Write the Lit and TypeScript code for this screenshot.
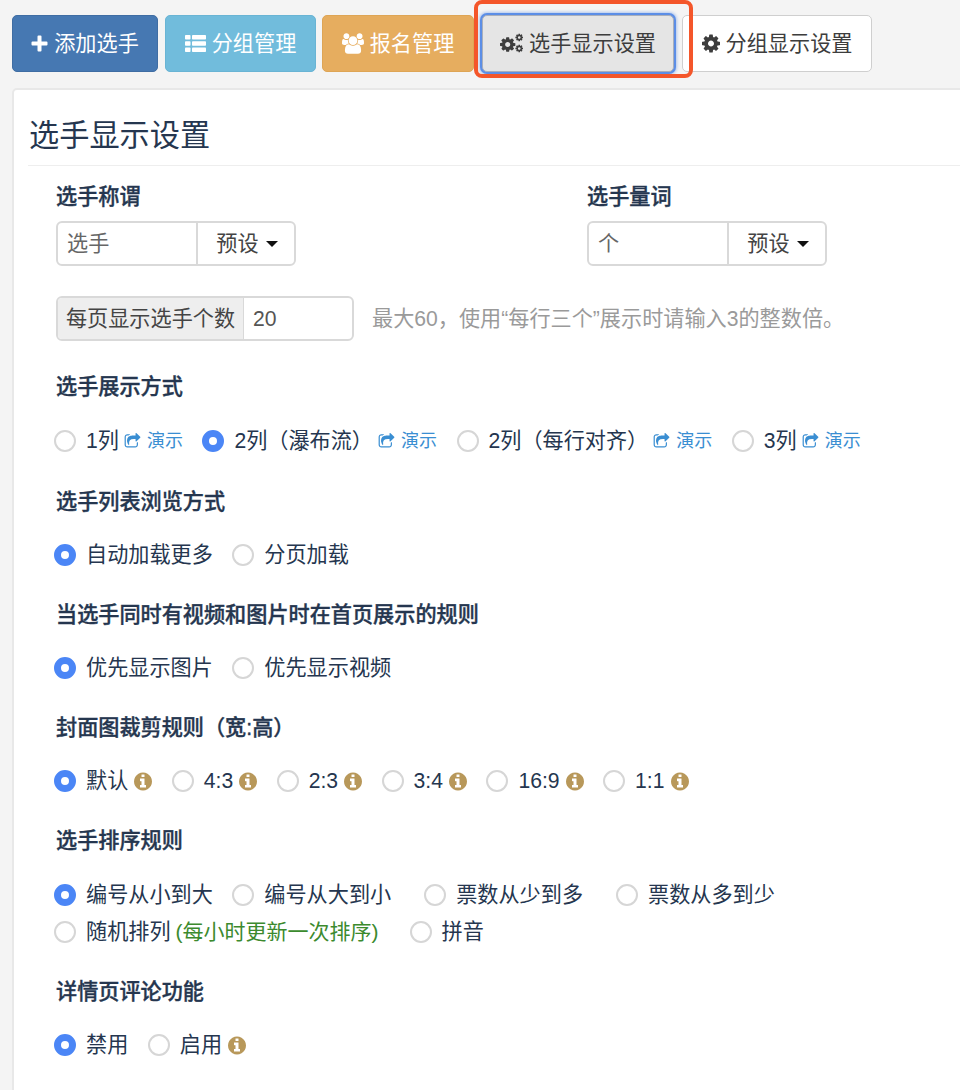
import { LitElement, html, css, svg } from "lit";
import { customElement } from "lit/decorators.js";

const COG = "M1024 896q0-106-75-181t-181-75-181 75-75 181 75 181 181 75 181-75 75-181zm512-109v222q0 12-8 23t-20 13l-185 28q-19 54-39 91 35 50 107 138 10 12 10 25t-9 23q-27 37-99 108t-94 71q-12 0-26-9l-138-108q-44 23-91 38-16 136-29 186-7 28-36 28h-222q-14 0-24.500-8.500t-11.500-21.500l-28-184q-49-16-90-37l-141 107q-10 9-25 9-14 0-25-11-126-114-165-168-7-10-7-23 0-12 8-23 15-21 51-66.500t54-70.500q-27-50-41-99l-183-27q-13-2-21-12.500t-8-23.500v-222q0-12 8-23t19-13l186-28q14-46 39-92-40-57-107-138-10-12-10-24 0-10 9-23 26-36 98.500-107.500t94.500-71.500q13 0 26 10l138 107q44-23 91-38 16-136 29-186 7-28 36-28h222q14 0 24.500 8.500t11.500 21.500l28 184q49 16 90 37l142-107q9-9 24-9 13 0 25 10 129 119 165 170 7 8 7 22 0 12-8 23-15 21-51 66.500t-54 70.500q26 50 41 98l183 28q13 2 21 12.500t8 23.500z";
const INFO = "M1024 1376v-160q0-14-9-23t-23-9h-96v-512q0-14-9-23t-23-9h-320q-14 0-23 9t-9 23v160q0 14 9 23t23 9h96v320h-96q-14 0-23 9t-9 23v160q0 14 9 23t23 9h448q14 0 23-9t9-23zm-128-896v-160q0-14-9-23t-23-9h-192q-14 0-23 9t-9 23v160q0 14 9 23t23 9h192q14 0 23-9t9-23zm640 416q0 209-103 385.500t-279.500 279.500-385.500 103-385.500-103-279.500-279.500-103-385.500 103-385.500 279.500-279.500 385.500-103 385.500 103 279.500 279.500 103 385.500z";
const SHARE = "M1472 989v259q0 119-84.500 203.500t-203.500 84.500h-832q-119 0-203.500-84.500t-84.500-203.500v-832q0-119 84.500-203.500t203.500-84.500h255q13 0 22.500 9.500t9.500 22.500q0 27-26 32-77 26-133 60-10 4-16 4h-112q-66 0-113 47t-47 113v832q0 66 47 113t113 47h832q66 0 113-47t47-113v-214q0-19 18-29 28-13 54-37 16-16 35-8 21 9 21 29zm237-496l-384 384q-18 19-45 19-12 0-25-5-39-17-39-59v-192h-160q-323 0-438 131-119 137-74 473 3 23-20 34-8 2-12 2-16 0-26-13-10-14-21-31t-39.500-68.500-49.500-99.500-38.500-114-17.500-122q0-49 3.500-91t14-90 28-88 47-81.500 68.500-74 94.500-61.500 124.500-48.500 159.500-30.500 196.500-11h160v-192q0-42 39-59 13-5 25-5 26 0 45 19l384 384q19 19 19 45t-19 45z";
const USERS = "M593 896q-162 5-265 128h-134q-82 0-138-40.500t-56-118.500q0-353 124-353 6 0 43.500 21t97.500 42.500 119 21.500q67 0 133-23-5 37-5 66 0 139 81 256zm1071 637q0 120-73 189.500t-194 69.500h-874q-121 0-194-69.500t-73-189.500q0-53 3.500-103.500t14-109 26.500-108.500 43-97.500 62-81 85.500-53.500 111.500-20q10 0 43 21.500t73 48 107 48 135 21.500 135-21.500 107-48 73-48 43-21.500q61 0 111.500 20t85.500 53.500 62 81 43 97.500 26.500 108.500 14 109 3.500 103.500zm-1024-1277q0 106-75 181t-181 75-181-75-75-181 75-181 181-75 181 75 75 181zm704 384q0 159-112.500 271.500t-271.500 112.500-271.500-112.500-112.500-271.500 112.500-271.500 271.500-112.500 271.500 112.500 112.500 271.500zm576 225q0 78-56 118.500t-138 40.500h-134q-103-123-265-128 81-117 81-256 0-29-5-66 66 23 133 23 59 0 119-21.500t97.500-42.500 43.500-21q124 0 124 353zm-128-609q0 106-75 181t-181 75-181-75-75-181 75-181 181-75 181 75 75 181z";

const plus = html`<svg class="ic" width="17" height="17" viewBox="0 0 17 17"><path fill="currentColor" d="M6.500 1.500a1 1 0 0 1 1-1h2a1 1 0 0 1 1 1v5h5a1 1 0 0 1 1 1v2a1 1 0 0 1-1 1h-5v5a1 1 0 0 1-1 1h-2a1 1 0 0 1-1-1v-5h-5a1 1 0 0 1-1-1v-2a1 1 0 0 1 1-1h5z"/></svg>`;
const list = html`<svg class="ic" width="21" height="17" viewBox="0 0 21 17"><g fill="currentColor"><rect y="0" width="5.500" height="4.600" rx=".8"/><rect y="6.200" width="5.500" height="4.600" rx=".8"/><rect y="12.400" width="5.500" height="4.600" rx=".8"/><rect x="7" y="0" width="14" height="4.600" rx=".8"/><rect x="7" y="6.200" width="14" height="4.600" rx=".8"/><rect x="7" y="12.400" width="14" height="4.600" rx=".8"/></g></svg>`;
const users = html`<svg class="ic" width="22" height="21" viewBox="0 0 1920 1792"><path fill="currentColor" d=${USERS}/></svg>`;
const cog = html`<svg class="ic" width="18" height="21" viewBox="0 0 1536 1792"><path fill="currentColor" d=${COG}/></svg>`;
const cogs = html`<svg class="ic" width="23" height="21" viewBox="0 0 2300 2100"><g fill="currentColor">
  ${svg`<path transform="translate(0 300) scale(1 .95)" d=${COG}/>`}
  ${svg`<path transform="translate(1540 0) scale(.5)" d=${COG}/>`}
  ${svg`<path transform="translate(1540 1100) scale(.5)" d=${COG}/>`}
</g></svg>`;
const info = html`<svg class="info" width="18" height="21" viewBox="0 0 1536 1792"><path fill="currentColor" d=${INFO}/></svg>`;
const share = html`<svg class="share" width="17" height="17" viewBox="0 0 1792 1792"><path fill="currentColor" d=${SHARE}/></svg>`;

type Item = { t: string; on?: boolean; demo?: boolean; tip?: boolean; note?: string; wide?: boolean; mid?: boolean };

const radio = (i: Item) => html`
  <span class="item ${i.wide ? "wide" : ""} ${i.mid ? "mid" : ""}">
    <span class="dot ${i.on ? "on" : ""}"></span>
    <span class="txt">${i.t}</span>
    ${i.note ? html`<span class="note">${i.note}</span>` : ""}
    ${i.tip ? info : ""}
    ${i.demo ? html`<a class="demo">${share}<span>演示</span></a>` : ""}
  </span>`;

@customElement("app-root")
export class AppRoot extends LitElement {
  static styles = css`
    :host {
      display: block;
      position: relative;
      width: 960px;
      height: 1090px;
      overflow: hidden;
      background: #f4f4f4;
      color: #25364f;
      font: 21.15px/30px "Liberation Sans", "Noto Sans CJK SC", sans-serif;
    }
    .toolbar { display: flex; padding: 15px 0 0 12px; height: 73px; box-sizing: border-box; }
    .btn {
      display: flex; align-items: center; justify-content: center; gap: 6px;
      height: 57px; box-sizing: border-box;
      border: 1.500px solid transparent; border-radius: 5px;
      color: #fff; white-space: nowrap;
    }
    .b1 { width: 146px; background: #4678b2; border-color: #3f6da3; margin-right: 7px; }
    .b2 { width: 151px; background: #71bcdc; border-color: #69b4d4; margin-right: 6px; }
    .b3 { width: 152px; background: #e6ad5f; border-color: #dea555; margin-right: 8px; }
    .b4 {
      width: 192px; background: #e5e5e5; border-color: #a9afbb; color: #3d3d3d; margin-right: 8px;
      box-shadow: 0 0 0 2px #5c8ee6, 0 0 3px 3px rgba(92, 142, 230, .45);
    }
    .b5 { width: 190px; background: #fff; border-color: #cfcfcf; color: #3d3d3d; }
    .ic { flex: none; }
    .mark {
      position: absolute; left: 474px; top: 0; width: 219px; height: 78px;
      box-sizing: border-box; border: 4px solid #f4562a; border-radius: 8px;
    }
    .panel {
      margin: 15px -10px 0 12px; height: 1100px;
      background: #fff; border: 2px solid #e8e8e8; border-radius: 5px;
      box-sizing: border-box; padding: 0 0 0 14px;
    }
    h1 {
      margin: 0; height: 76px; box-sizing: border-box; padding: 26px 0 0 1px;
      font-size: 30.2px; line-height: 40px; font-weight: 400;
      border-bottom: 1px solid #eee;
    }
    .body { padding: 16px 0 0 28px; }
    .label { font-weight: 500; -webkit-text-stroke: .35px currentColor; line-height: 30px; }
    .two { display: flex; }
    .two > div { width: 531px; flex: none; }
    .group {
      display: flex; height: 45px; box-sizing: border-box;
      border: 2px solid #d9d9d9; border-radius: 6px; margin-top: 9px; color: #555;
      line-height: 41px;
    }
    .pick { width: 240px; }
    .pick .val { width: 140px; padding-left: 9px; box-sizing: border-box; border-right: 2px solid #d9d9d9; color: #666; }
    .pick .dd { flex: 1; display: flex; align-items: center; justify-content: center; gap: 7px; padding-left: 2px; color: #444; }
    .caret { width: 0; height: 0; border: 6px solid transparent; border-top-color: #111; border-bottom: 0; }
    .count-row { display: flex; align-items: center; gap: 18px; margin-top: 30px; }
    .count { width: 298px; margin: 0; }
    .addon { width: 185px; flex: none; background: #eee; text-align: center; border-right: 1.500px solid #d9d9d9; border-radius: 4px 0 0 4px; color: #444; }
    .num { padding-left: 9px; color: #555; }
    .help { color: #9a9a9a; }
    .sec { margin-top: 30px; }
    .sec.first { margin-top: 31px; }
    .sec.next { margin-top: 31px; }
    .rows { margin-top: 23px; }
    .rows.low { margin-top: 24px; }
    .row { display: flex; align-items: center; gap: 19.500px; height: 30px; margin-left: -2px; margin-bottom: 7px; }
    .item { display: flex; align-items: center; white-space: nowrap; }
    .item.wide { margin-left: 13.500px; }
    .item.mid { margin-left: 11.500px; }
    .dot {
      flex: none; width: 22px; height: 22px; box-sizing: border-box; margin-right: 10px;
      border: 2px solid #d6d6d6; border-radius: 50%; background: #fff;
    }
    .dot.on { border: 7px solid #4b86f6; }
    .note { color: #3c8a2e; margin-left: 5px; font-size: 21px; }
    .info { color: #b8985a; margin-left: 6px; flex: none; }
    .demo { display: flex; align-items: center; gap: 6px; color: #3a8ed2; font-size: 18px; margin-left: 5px; }
    .share { flex: none; }
  `;

  private renderRows(rows: Item[][], low = false) {
    return html`<div class="rows ${low ? "low" : ""}">${rows.map(
      (r) => html`<div class="row">${r.map(radio)}</div>`
    )}</div>`;
  }

  render() {
    return html`
      <div class="toolbar">
        <div class="btn b1">${plus}<span>添加选手</span></div>
        <div class="btn b2">${list}<span>分组管理</span></div>
        <div class="btn b3">${users}<span>报名管理</span></div>
        <div class="btn b4">${cogs}<span>选手显示设置</span></div>
        <div class="btn b5">${cog}<span>分组显示设置</span></div>
      </div>
      <div class="mark"></div>
      <div class="panel">
        <h1>选手显示设置</h1>
        <div class="body">
          <div class="two">
            <div>
              <div class="label">选手称谓</div>
              <div class="group pick"><span class="val">选手</span><span class="dd">预设<i class="caret"></i></span></div>
            </div>
            <div>
              <div class="label">选手量词</div>
              <div class="group pick"><span class="val">个</span><span class="dd">预设<i class="caret"></i></span></div>
            </div>
          </div>
          <div class="count-row">
            <div class="group count"><span class="addon">每页显示选手个数</span><span class="num">20</span></div>
            <span class="help">最大60，使用“每行三个”展示时请输入3的整数倍。</span>
          </div>
          <div class="sec first">
            <div class="label">选手展示方式</div>
            ${this.renderRows([[
              { t: "1列", demo: true },
              { t: "2列（瀑布流）", on: true, demo: true },
              { t: "2列（每行对齐）", demo: true },
              { t: "3列", demo: true },
            ]], true)}
          </div>
          <div class="sec next">
            <div class="label">选手列表浏览方式</div>
            ${this.renderRows([[{ t: "自动加载更多", on: true }, { t: "分页加载" }]])}
          </div>
          <div class="sec">
            <div class="label">当选手同时有视频和图片时在首页展示的规则</div>
            ${this.renderRows([[{ t: "优先显示图片", on: true }, { t: "优先显示视频" }]])}
          </div>
          <div class="sec">
            <div class="label">封面图裁剪规则（宽:高）</div>
            ${this.renderRows([[
              { t: "默认", on: true, tip: true },
              { t: "4:3", tip: true },
              { t: "2:3", tip: true },
              { t: "3:4", tip: true },
              { t: "16:9", tip: true },
              { t: "1:1", tip: true },
            ]])}
          </div>
          <div class="sec">
            <div class="label">选手排序规则</div>
            ${this.renderRows([
              [
                { t: "编号从小到大", on: true },
                { t: "编号从大到小" },
                { t: "票数从少到多", wide: true },
                { t: "票数从多到少", wide: true },
              ],
              [{ t: "随机排列", note: "(每小时更新一次排序)" }, { t: "拼音", mid: true }],
            ], true)}
          </div>
          <div class="sec">
            <div class="label">详情页评论功能</div>
            ${this.renderRows([[{ t: "禁用", on: true }, { t: "启用", tip: true }]])}
          </div>
        </div>
      </div>
    `;
  }
}
